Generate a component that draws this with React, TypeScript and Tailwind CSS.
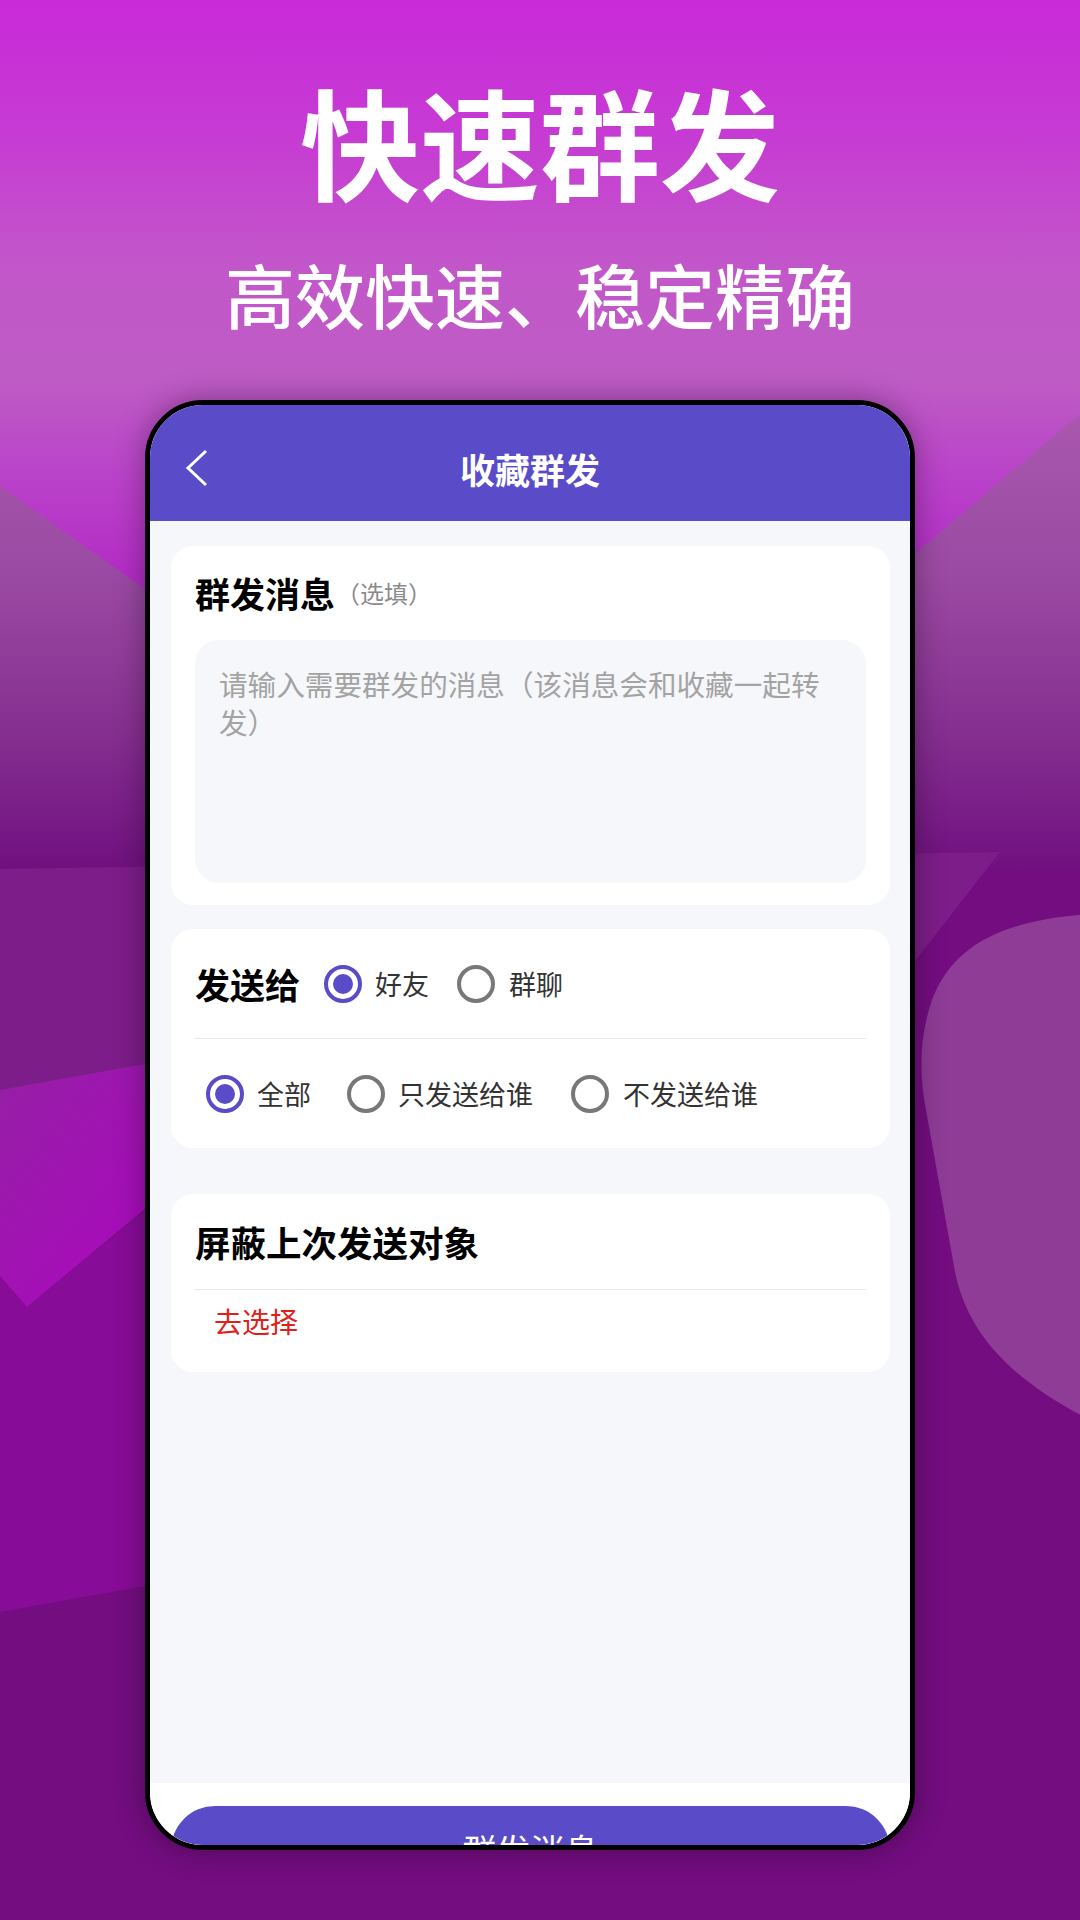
import React from 'react';

// Promo screenshot: "快速群发" with a phone mock of the 收藏群发 screen

const PURPLE = '#5a4bc8';

const Radio = ({ checked }: { checked?: boolean }) => (
  <span
    className={
      checked
        ? 'flex h-[38px] w-[38px] shrink-0 items-center justify-center rounded-full border-[4px] border-[#5a4bc8]'
        : 'flex h-[38px] w-[38px] shrink-0 items-center justify-center rounded-full border-[4px] border-[#787878]'
    }
  >
    {checked && <span className="h-[20px] w-[20px] rounded-full bg-[#5a4bc8]" />}
  </span>
);

const Backdrop = () => (
  <svg className="absolute inset-0" width="1080" height="1920" viewBox="0 0 1080 1920">
    <defs>
      <linearGradient id="bgTop" x1="0" y1="0" x2="0" y2="900" gradientUnits="userSpaceOnUse">
        <stop offset="0" stopColor="#c92ad9" />
        <stop offset="0.15" stopColor="#c63bd3" />
        <stop offset="0.3" stopColor="#c257c9" />
        <stop offset="0.42" stopColor="#be5cc5" />
        <stop offset="0.54" stopColor="#b940c9" />
        <stop offset="0.64" stopColor="#b32cc5" />
        <stop offset="1" stopColor="#9a20b0" />
      </linearGradient>
      <linearGradient id="mauve" x1="0" y1="414" x2="0" y2="870" gradientUnits="userSpaceOnUse">
        <stop offset="0" stopColor="#a958ae" />
        <stop offset="0.35" stopColor="#9b4aa3" />
        <stop offset="0.7" stopColor="#852f90" />
        <stop offset="1" stopColor="#701080" />
      </linearGradient>
      <linearGradient id="band" x1="0" y1="1090" x2="160" y2="1220" gradientUnits="userSpaceOnUse">
        <stop offset="0" stopColor="#961ea6" />
        <stop offset="1" stopColor="#a80cbb" />
      </linearGradient>
    </defs>
    <rect x="0" y="0" width="1080" height="900" fill="url(#bgTop)" />
    <rect x="0" y="866" width="1080" height="1054" fill="#730d80" />
    <polygon points="0,486 540,870 1080,414 1080,870 0,870" fill="url(#mauve)" />
    <polygon points="0,869 1000,852 915,961 600,1000 0,1090" fill="#7d1d89" />
    <polygon points="0,1276 27,1307 560,870 560,1512 0,1612" fill="#870c97" />
    <polygon points="0,1090 368,1024 27,1307 0,1276" fill="url(#band)" />
    <path
      d="M1090 914 C1010 920 955 940 932 1000 C918 1040 920 1080 926 1110 L955 1272 C965 1320 995 1372 1090 1420 Z"
      fill="#8e3c96"
    />
  </svg>
);

export default function App() {
  return (
    <div className="relative h-[1920px] w-[1080px] overflow-hidden font-['Noto_Sans_CJK_SC','Noto_Sans',sans-serif]">
      <Backdrop />

      <div className="relative flex flex-col items-center pt-[80px]">
        <h1 className="text-[120px] font-bold leading-none text-white">快速群发</h1>
        <p className="mt-[59px] text-[70px] font-medium leading-none text-white">高效快速、稳定精确</p>

        {/* phone mock */}
        <div className="mr-[20px] mt-[71px] flex h-[1450px] w-[770px] flex-col overflow-hidden rounded-[58px] border-[5px] border-black bg-white shadow-[0_0_30px_rgba(0,0,0,0.35)]">
          <div className="relative flex h-[116px] shrink-0 items-center justify-center bg-[#5a4bc8] pt-[10px]">
            <svg className="absolute left-[34px] top-[44px]" width="26" height="38" viewBox="0 0 26 38">
              <path d="M22 2 L4 19 L22 36" fill="none" stroke="#fff" strokeWidth="3" />
            </svg>
            <span className="text-[35px] font-bold leading-none text-white">收藏群发</span>
          </div>

          <div className="flex h-[1262px] shrink-0 flex-col bg-[#f6f7fb] pl-[21px] pr-[20px] pt-[25px]">
            {/* message */}
            <div className="h-[359px] rounded-[22px] bg-white px-[24px] pt-[29px]">
              <div className="flex items-center">
                <span className="text-[35px] font-bold leading-none text-black">群发消息</span>
                <span className="ml-[1px] text-[24px] leading-none text-[#8a8a8a]">（选填）</span>
              </div>
              <div className="mt-[30px] h-[243px] rounded-[24px] bg-[#f6f7fb] pl-[24px] pr-[40px] pt-[25px] text-[28.6px] leading-[38px] text-[#a3a3a3]">
                请输入需要群发的消息（该消息会和收藏一起转发）
              </div>
            </div>

            {/* send to */}
            <div className="mt-[24px] h-[219px] rounded-[22px] bg-white">
              <div className="flex h-[109px] items-center px-[24px] text-[27px] text-[#333]">
                <span className="text-[35px] font-bold leading-none text-black">发送给</span>
                <span className="ml-[24px]">
                  <Radio checked />
                </span>
                <span className="ml-[13px] leading-none">好友</span>
                <span className="ml-[28px]">
                  <Radio />
                </span>
                <span className="ml-[14px] leading-none">群聊</span>
              </div>
              <div className="mx-[24px] h-px bg-[#e8e8e8]" />
              <div className="flex h-[109px] items-center pl-[35px] text-[27px] text-[#333]">
                <Radio checked />
                <span className="ml-[13px] leading-none">全部</span>
                <span className="ml-[36px]">
                  <Radio />
                </span>
                <span className="ml-[13px] leading-none">只发送给谁</span>
                <span className="ml-[38px]">
                  <Radio />
                </span>
                <span className="ml-[14px] leading-none">不发送给谁</span>
              </div>
            </div>

            {/* block last targets */}
            <div className="mt-[46px] h-[178px] rounded-[22px] bg-white">
              <div className="flex h-[95px] items-center px-[24px]">
                <span className="text-[35.5px] font-bold leading-none text-black">屏蔽上次发送对象</span>
              </div>
              <div className="mx-[24px] h-px bg-[#e8e8e8]" />
              <div className="pl-[43px] pt-[17px] text-[28px] leading-none text-[#e0201a]">去选择</div>
            </div>
          </div>

          <div className="h-[62px] shrink-0 bg-white pl-[21px] pr-[20px] pt-[23px]">
            <div
              className="flex h-[88px] items-center justify-center rounded-full text-[34px] leading-none text-white"
              style={{ backgroundColor: PURPLE }}
            >
              群发消息
            </div>
          </div>
        </div>
      </div>
    </div>
  );
}
